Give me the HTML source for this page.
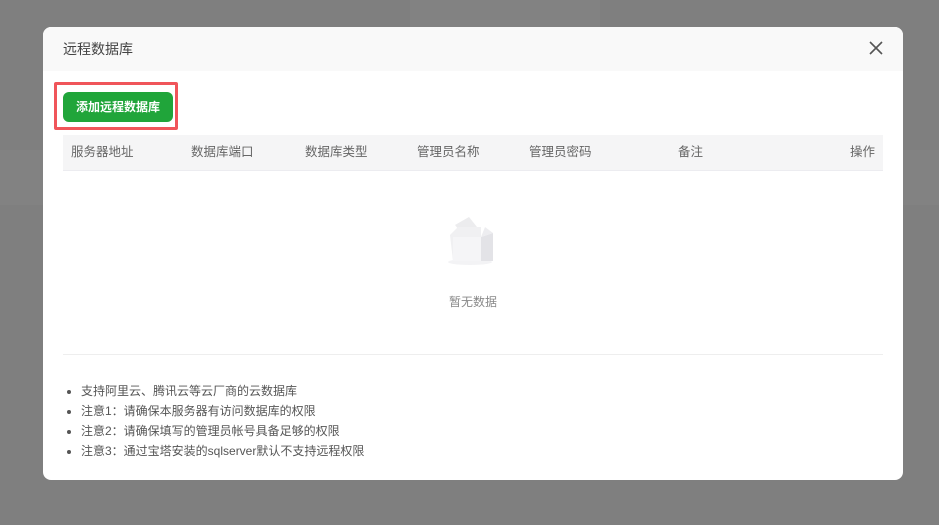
<!DOCTYPE html><html><head><meta charset="utf-8"><style>
body{margin:0;width:939px;height:525px;background:#7f7f7f;position:relative;overflow:hidden;font-family:"Liberation Sans","Noto Sans CJK SC",sans-serif}
.bg1{position:absolute;left:410px;top:0;width:190px;height:40px;background:#828282}
.bg2{position:absolute;left:0;top:150px;width:939px;height:55px;background:#828282}
.m{position:absolute;left:43px;top:27px;width:860px;height:453px;background:#fff;border-radius:8px;overflow:hidden}
.hd{height:44px;background:#f9f9f9;font-size:14px;color:#444;line-height:44px;padding-left:20px}
.x{position:absolute;right:18px;top:12px;width:18px;height:18px}
.red{position:absolute;left:11px;top:55px;width:118px;height:42px;border:3px solid #f0555a;border-radius:2px}
.btn{position:absolute;left:20px;top:65px;width:110px;height:30px;background:#20a53a;border-radius:6px;color:#fff;font-size:12px;font-weight:bold;line-height:30px;text-align:center}
.th{position:absolute;left:20px;top:108px;width:820px;height:35px;background:#f5f5f6;border-bottom:1px solid #ececf0;font-size:12.5px;color:#666;line-height:35px}
.th span{position:absolute}
.empty{position:absolute;left:0;width:860px;top:266px;text-align:center;font-size:12px;color:#888}
.hr{position:absolute;left:20px;top:327px;width:820px;height:1px;background:#eee}
ul{position:absolute;left:20px;top:354px;margin:0;padding-left:18px;font-size:12px;color:#555;line-height:20px}
</style></head><body>
<div class="bg1"></div><div class="bg2"></div>
<div class="m">
<div class="hd">远程数据库</div>
<svg class="x" viewBox="0 0 18 18"><path d="M3 3L15 15M15 3L3 15" stroke="#555" stroke-width="1.6"/></svg>
<div class="red"></div>
<div class="btn">添加远程数据库</div>
<div class="th"><span style="left:8px">服务器地址</span><span style="left:128px">数据库端口</span><span style="left:242px">数据库类型</span><span style="left:354px">管理员名称</span><span style="left:466px">管理员密码</span><span style="left:615px">备注</span><span style="right:8px">操作</span></div>
<svg style="position:absolute;left:402px;top:186px" width="50" height="52" viewBox="0 0 50 52"><ellipse cx="25" cy="49" rx="22" ry="3" fill="#f3f3f5"/><path d="M10 12L24 4L32 14L18 22Z" fill="#ececee"/><path d="M5 22L13 14L36 14L36 48L8 48Z" fill="#f0f0f2"/><rect x="8" y="24" width="28" height="24" fill="#f5f5f7"/><path d="M36 24L48 20L48 48L36 48Z" fill="#e3e3e7"/><path d="M36 24L40 14L48 20Z" fill="#ededf0"/></svg>
<div class="empty">暂无数据</div>
<div class="hr"></div>
<ul><li>支持阿里云、腾讯云等云厂商的云数据库</li><li>注意1：请确保本服务器有访问数据库的权限</li><li>注意2：请确保填写的管理员帐号具备足够的权限</li><li>注意3：通过宝塔安装的sqlserver默认不支持远程权限</li></ul>
</div>
</body></html>
